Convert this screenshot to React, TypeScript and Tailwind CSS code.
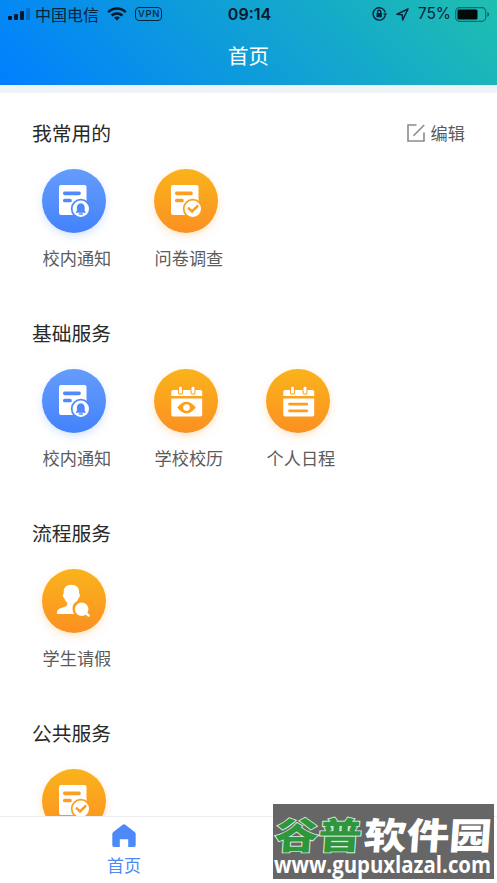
import type { ReactNode } from "react";

type Kind = "notice" | "survey" | "calendar" | "schedule" | "leave";

const BLUE = "#5089fb";
const ORANGE = "#fb9f20";

function DocumentGlyph({ color, children }: { color: string; children: ReactNode }) {
  return (
    <>
      <rect x="17" y="16" width="27.5" height="30" rx="2" fill="#fff" />
      <path d="M22.8 24.3H37M22.8 31.5H28" stroke={color} strokeWidth="3.7" strokeLinecap="round" />
      <circle cx="38.8" cy="39.8" r="10" fill={color} />
      <circle cx="38.8" cy="39.8" r="8.2" fill="#fff" />
      {children}
    </>
  );
}

function CalendarGlyph({ children }: { children: ReactNode }) {
  return (
    <>
      <path d="M17.3 27V22.8a1.8 1.8 0 0 1 1.8-1.8H46.4a1.8 1.8 0 0 1 1.8 1.8V27ZM17.3 29.4H48.2V45.8a1.8 1.8 0 0 1-1.8 1.8H19.1a1.8 1.8 0 0 1-1.8-1.8Z" fill="#fff" />
      <path d="M26.5 19V23.2M39 19V23.2" stroke={ORANGE} strokeWidth="5" strokeLinecap="round" />
      <path d="M26.5 18.9V23.3M39 18.9V23.3" stroke="#fff" strokeWidth="3" strokeLinecap="round" />
      {children}
    </>
  );
}

function Glyph({ kind }: { kind: Kind }) {
  switch (kind) {
    case "notice":
      return (
        <DocumentGlyph color={BLUE}>
          <path d="M38.8 34.3c-2.9.5-3.9 2.2-3.9 4.5v3l-1.4 1.9h10.6L42.7 41.8v-3c0-2.3-1-4-3.9-4.5Z" fill={BLUE} />
          <path d="M37.3 45h3" stroke={BLUE} strokeWidth="1.3" strokeLinecap="round" />
        </DocumentGlyph>
      );
    case "survey":
      return (
        <DocumentGlyph color={ORANGE}>
          <path d="m34.8 39.4 3.2 3 5.4-5.2" fill="none" stroke={ORANGE} strokeWidth="2.6" strokeLinecap="round" />
        </DocumentGlyph>
      );
    case "calendar":
      return (
        <CalendarGlyph>
          <path d="M23.2 38.6Q32.5 26.8 41.8 38.6 32.5 50.4 23.2 38.6Z" fill={ORANGE} />
          <circle cx="32.5" cy="38.6" r="3.3" fill="#fff" />
        </CalendarGlyph>
      );
    case "schedule":
      return (
        <CalendarGlyph>
          <path d="M23.5 35.1H40.8M23.5 41.8H40.8" stroke={ORANGE} strokeWidth="2.8" strokeLinecap="round" />
        </CalendarGlyph>
      );
    case "leave":
      return (
        <>
          <path d="M29.3 15.7c-5.2 0-7.6 3.2-7.6 7v2c-1.3.2-1 3.5.5 4 .5 2.1 1.6 3.8 3 4.8v2.3c-.7 3-10.4 2.5-10.4 8 0 .9.5 1.3 1.3 1.3H32.2c-3-5.3-1.5-10.2 1.3-11.9 1.5-1 2.6-2.4 3.1-4.5 1.5-.5 1.8-3.8.5-4v-2c0-3.8-2.5-7-7.8-7Z" fill="#fff" />
          <circle cx="39.7" cy="40.3" r="6.7" fill="#fff" />
          <path d="m43.5 43.9 3.1 2.6" stroke="#fff" strokeWidth="2.4" strokeLinecap="round" />
        </>
      );
  }
}

function Service({ kind, label }: { kind: Kind; label: string }) {
  const tone =
    kind === "notice"
      ? "from-[#659cfb] to-[#4382fc] shadow-[0_3px_8px_rgba(67,130,252,0.22)]"
      : "from-[#fab31b] to-[#fb9022] shadow-[0_3px_8px_rgba(251,160,34,0.25)]";
  return (
    <div className="w-28 shrink-0">
      <div className={`size-16 rounded-full bg-linear-to-b ${tone}`}>
        <svg viewBox="0 0 64 64" className="size-16">
          <Glyph kind={kind} />
        </svg>
      </div>
      <div className="mt-[13px] pl-[0.5px] text-[17.2px] leading-6 text-[#5c5c5c]">{label}</div>
    </div>
  );
}

function EditIcon() {
  return (
    <svg viewBox="0 0 18 18" className="size-[18px]" fill="none" stroke="#8b8b8b" strokeWidth="1.6">
      <path d="M9.5 1H1v16h16V8.5M6.5 11.8 17.2 1" />
    </svg>
  );
}

function Section({ title, items, editable }: { title: string; items: { kind: Kind; label: string }[]; editable?: boolean }) {
  return (
    <section className="h-[200px] shrink-0 pt-[26px]">
      <div className="flex h-7 items-center justify-between pr-[32px] pl-8">
        <h2 className="text-[19.8px] text-[#292929]">{title}</h2>
        {editable && (
          <button className="flex items-center gap-[6px] text-[17.2px] text-[#5c5c5c]">
            <EditIcon />
            编辑
          </button>
        )}
      </div>
      <div className="mt-[22px] flex pl-[42px]">
        {items.map((item) => (
          <Service key={item.label} {...item} />
        ))}
      </div>
    </section>
  );
}

function StatusBar() {
  return (
    <div className="flex h-7 items-center justify-between pr-[7px] pl-2 text-[#06243c]">
      <div className="flex flex-1 items-center">
        <svg viewBox="0 0 22 12" className="h-3 w-[22px]" fill="#06182c">
          <rect y="8" width="4" height="4" rx="1" />
          <rect x="6" y="6" width="4" height="6" rx="1" />
          <rect x="12" y="3" width="4" height="9" rx="1" />
          <rect x="18" width="4" height="12" rx="1" opacity=".25" />
        </svg>
        <span className="ml-[5px] text-[16px] leading-5">中国电信</span>
        <svg viewBox="0 0 20 14" className="ml-2 h-[14px] w-5" fill="none" stroke="#06182c" strokeWidth="2.5">
          <path d="M1.2 5.1c5-4.7 12.6-4.7 17.6 0M4.6 8.5c3.1-2.8 7.7-2.8 10.8 0" />
          <path d="m10 13.5-2.9-2.8c1.8-1.5 4-1.5 5.8 0Z" fill="#06182c" stroke="none" />
        </svg>
        <span className="ml-2 flex h-[14px] w-[27px] items-center justify-center rounded-[4px] border-[1.5px] border-current pl-px font-[Inter] text-[9.5px] font-medium tracking-[0.7px]">
          VPN
        </span>
      </div>
      <span className="pl-px font-[Inter] text-[16px] font-semibold text-[#06182c]">09:14</span>
      <div className="flex flex-1 items-center justify-end">
        <svg viewBox="0 0 16 14" className="h-[14px] w-4" fill="none" stroke="currentColor" strokeWidth="1.4">
          <path d="M13.2 8.7A6.2 6.2 0 1 1 13.3 5.5" />
          <path d="M11 6.4h4.4l-2.2 2.7Z" fill="currentColor" stroke="none" />
          <rect x="4.5" y="6" width="5.4" height="4.3" rx=".6" fill="currentColor" stroke="none" />
          <path d="M5.6 6.2V4.9a1.6 1.6 0 0 1 3.2 0v1.3" />
        </svg>
        <svg viewBox="0 0 13 13" className="ml-2 size-[13px]" fill="none" stroke="currentColor" strokeWidth="1.5" strokeLinejoin="round">
          <path d="M12 1 1 6.3l5.2.5.5 5.2Z" />
        </svg>
        <span className="ml-[9px] font-[Inter] text-[15.5px] tracking-[-0.1px]">75%</span>
        <svg viewBox="0 0 35 15" className="ml-1 h-[15px] w-[35px]">
          <rect x=".7" y=".7" width="30" height="13.6" rx="3.8" fill="none" stroke="#06243c" strokeOpacity=".55" strokeWidth="1.2" />
          <rect x="2.5" y="2.5" width="20" height="10" rx="1.5" fill="#020a0a" />
          <path d="M32.4 5v5c2.3-1 2.3-4 0-5Z" fill="#06243c" opacity=".6" />
        </svg>
      </div>
    </div>
  );
}

function Watermark() {
  return (
    <div className="absolute top-[804px] left-[273px] h-[75px] w-[221px] bg-[#666]">
      <svg viewBox="0 0 221 75" className="h-[75px] w-[221px] overflow-visible font-['Noto_Sans_CJK_SC',sans-serif]">
        <g transform="translate(0 44.5) skewX(-4) scale(1 .87)" fontWeight="900" fontSize="42">
          <text x="1" y="0" textLength="87" lengthAdjust="spacingAndGlyphs" fill="#2e963d" stroke="#d8f0d8" strokeWidth="2" paintOrder="stroke">谷普</text>
          <text x="90" y="0" textLength="128" lengthAdjust="spacingAndGlyphs" fill="#fff">软件园</text>
        </g>
        <text x="1" y="69" textLength="217" lengthAdjust="spacingAndGlyphs" fill="#fff" className="font-['Open_Sans',sans-serif] text-[23.5px] font-bold">
          www.gupuxlazal.com
        </text>
      </svg>
    </div>
  );
}

export default function App() {
  return (
    <div className="relative flex h-[883px] w-[497px] flex-col overflow-hidden bg-white font-['Noto_Sans_CJK_SC',sans-serif]">
      <header className="h-[85px] shrink-0 bg-linear-[45deg,#007fff,#1fbfaf]">
        <StatusBar />
        <h1 className="flex h-[55px] items-center justify-center text-[20.5px] text-white">首页</h1>
      </header>
      <div className="h-2 shrink-0 bg-[#eff2f7]" />
      <main className="flex min-h-0 flex-1 flex-col overflow-hidden">
        <Section title="我常用的" editable items={[{ kind: "notice", label: "校内通知" }, { kind: "survey", label: "问卷调查" }]} />
        <Section title="基础服务" items={[{ kind: "notice", label: "校内通知" }, { kind: "calendar", label: "学校校历" }, { kind: "schedule", label: "个人日程" }]} />
        <Section title="流程服务" items={[{ kind: "leave", label: "学生请假" }]} />
        <Section title="公共服务" items={[{ kind: "survey", label: "" }]} />
      </main>
      <nav className="flex h-[67px] shrink-0 border-t border-[#ededed] bg-white">
        <div className="flex w-[248px] flex-col items-center pt-[7px] text-[#4d8af8]">
          <svg viewBox="0 0 24 24" className="size-6" fill="currentColor">
            <path d="M10.4.9Q12-.3 13.6.9L22.7 8Q23.7 8.8 23.7 10V21.3Q23.7 23 22 23H16.2V15.3H7.8V23H2Q.3 23 .3 21.3V10Q.3 8.8 1.3 8Z" />
          </svg>
          <span className="mt-[5px] text-[17px] leading-6">首页</span>
        </div>
      </nav>
      <Watermark />
    </div>
  );
}
